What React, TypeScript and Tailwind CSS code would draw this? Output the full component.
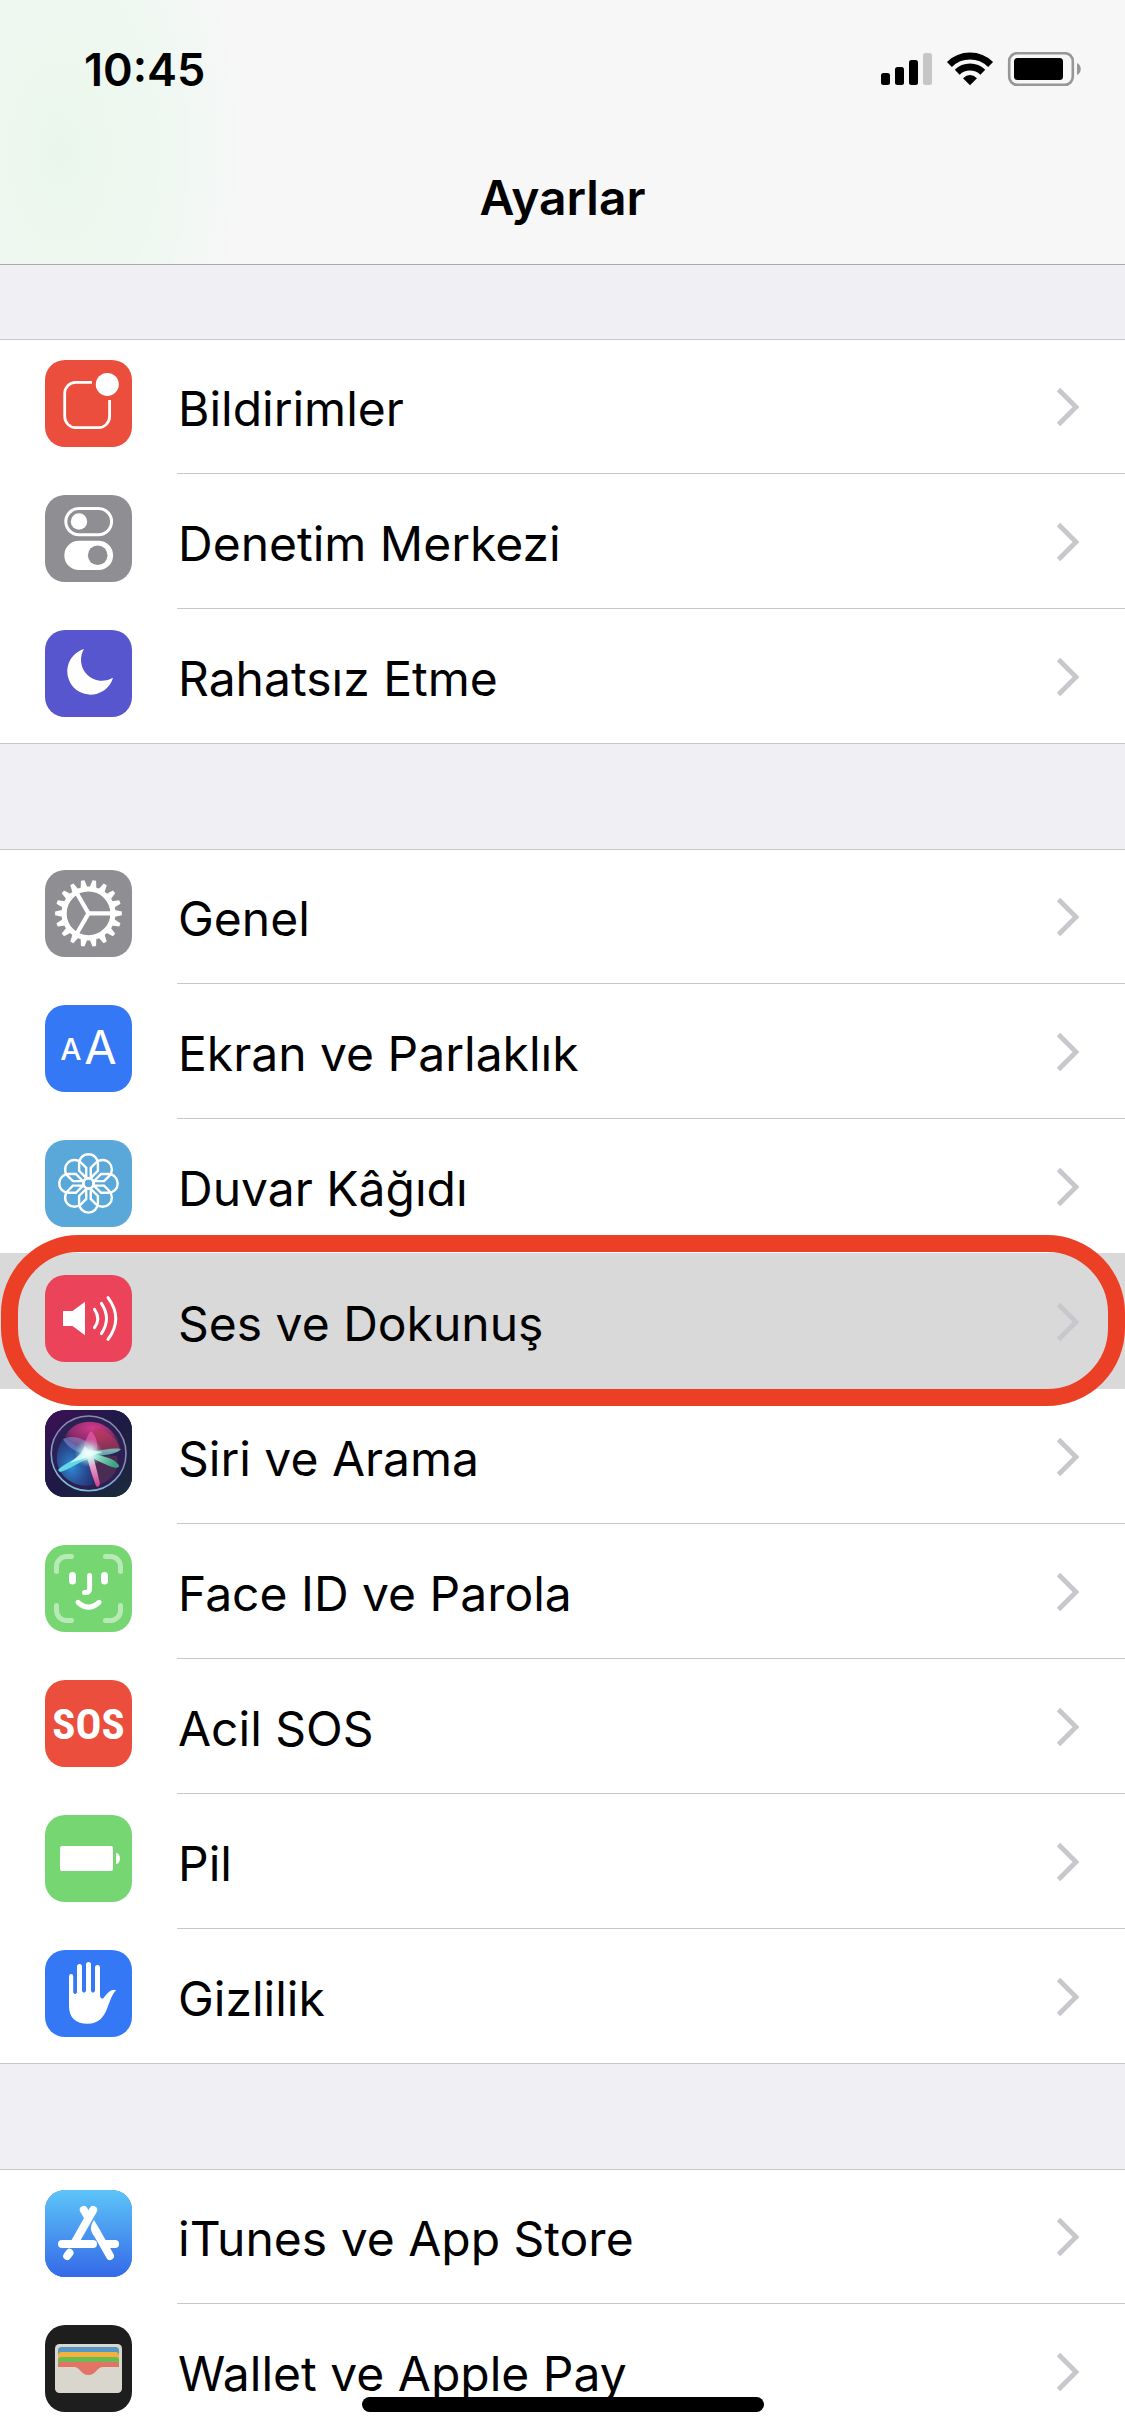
import type { ReactNode } from "react";

function Glyph({ children }: { children: ReactNode }) {
  return (
    <svg viewBox="0 0 87 87" className="size-full" fill="none" aria-hidden="true">
      {children}
    </svg>
  );
}

const NotificationsIcon = () => (
  <Glyph>
    <path
      d="M47 22.4H30.7a11 11 0 0 0-11 11v23.2a11 11 0 0 0 11 11h22.9a11 11 0 0 0 11-11V40"
      stroke="#fff"
      strokeWidth="2.8"
    />
    <circle cx="62.3" cy="24.4" r="11.5" fill="#fff" />
  </Glyph>
);

const ControlCenterIcon = () => (
  <Glyph>
    <rect x="20.8" y="13.5" width="45.8" height="26.2" rx="13.1" stroke="#fff" strokeWidth="3" />
    <circle cx="34" cy="26.5" r="8.2" fill="#fff" />
    <rect x="19.3" y="45.7" width="48.8" height="29.3" rx="14.6" fill="#fff" />
    <circle cx="52.7" cy="60.3" r="9.8" fill="#8e8e93" />
  </Glyph>
);

const MoonIcon = () => (
  <Glyph>
    <path d="M39 19A23.3 23.3 0 1 0 68 47.7A21 21 0 0 1 39 19Z" fill="#fff" />
  </Glyph>
);

const teeth = Array.from({ length: 18 }, (_, i) => i * 20);

const GearIcon = () => (
  <Glyph>
    <g transform="translate(43.5 43.4)">
      {teeth.map((a) => (
        <path key={a} transform={`rotate(${a})`} d="M24-3.8L33.4-1.8V1.8L24 3.8Z" fill="#fff" />
      ))}
      <circle r="24.4" stroke="#fff" strokeWidth="5.2" />
      {[0, 120, 240].map((a) => (
        <path key={a} transform={`rotate(${a})`} d="M0 0H23" stroke="#fff" strokeWidth="4.2" />
      ))}
    </g>
  </Glyph>
);

const TextSizeIcon = () => (
  <Glyph>
    <text x="26" y="55" textAnchor="middle" fill="#fff" fontSize="30" className="font-medium">
      A
    </text>
    <text x="55.5" y="59" textAnchor="middle" fill="#fff" fontSize="47">
      A
    </text>
  </Glyph>
);

const FlowerIcon = () => (
  <Glyph>
    <g transform="translate(43.5 43.4)" stroke="#fff" strokeWidth="2.4">
      {[0, 45, 90, 135, 180, 225, 270, 315].map((a) => (
        <path
          key={a}
          transform={`rotate(${a})`}
          d="M-9.4-19.8A9.4 9.4 0 0 1 9.4-19.8V-12.6L2-5.2H-2L-9.4-12.6Z"
        />
      ))}
      <circle r="5" />
    </g>
  </Glyph>
);

const SpeakerIcon = () => (
  <Glyph>
    <path d="M18 36H27.5L40 26.7V60.3L27.5 51H18Z" fill="#fff" />
    <g stroke="#fff" strokeWidth="3" strokeLinecap="round">
      <path d="M49.5 34.3Q56 43.5 49.5 52.7" />
      <path d="M56.4 28.4Q66.6 43.5 56.4 58.6" />
      <path d="M63 22.6Q78.5 43.5 63 64.4" />
    </g>
  </Glyph>
);

const SiriIcon = () => (
  <Glyph>
    <defs>
      <linearGradient id="siri-bg" x1="0" y1="0" x2="1" y2="1">
        <stop offset="0" stopColor="#3d1058" />
        <stop offset="0.5" stopColor="#1d1a45" />
        <stop offset="1" stopColor="#1b2c3c" />
      </linearGradient>
      <linearGradient id="siri-ring" x1="0.8" y1="0" x2="0.4" y2="1">
        <stop offset="0" stopColor="#8c8aa0" />
        <stop offset="0.5" stopColor="#8a86bd" />
        <stop offset="1" stopColor="#7dc0d8" />
      </linearGradient>
      <radialGradient id="siri-pink" cx="0.5" cy="0.2" r="0.7">
        <stop offset="0" stopColor="#d23a8c" />
        <stop offset="0.6" stopColor="#a52e72" stopOpacity="0.8" />
        <stop offset="1" stopColor="#63286c" stopOpacity="0.2" />
      </radialGradient>
      <radialGradient id="siri-blue" cx="0.4" cy="0.6" r="0.7">
        <stop offset="0" stopColor="#2f8fd8" />
        <stop offset="1" stopColor="#24459a" stopOpacity="0.4" />
      </radialGradient>
      <radialGradient id="siri-glow">
        <stop offset="0" stopColor="#fff" />
        <stop offset="0.35" stopColor="#d5fff5" stopOpacity="0.8" />
        <stop offset="1" stopColor="#8de8e0" stopOpacity="0" />
      </radialGradient>
      <linearGradient id="siri-teal" x1="0" y1="0" x2="1" y2="0.3">
        <stop offset="0" stopColor="#c9fff2" />
        <stop offset="1" stopColor="#3da481" />
      </linearGradient>
      <linearGradient id="siri-petal" x1="0" y1="0" x2="0" y2="1">
        <stop offset="0" stopColor="#f6e4f5" />
        <stop offset="1" stopColor="#d0418f" />
      </linearGradient>
    </defs>
    <rect width="87" height="87" fill="url(#siri-bg)" />
    <circle cx="43.6" cy="43.4" r="37.4" fill="#2a2052" />
    <path d="M20 27C28 8 56 7 68 23C76 32 78 42 70 42L43 42Z" fill="url(#siri-pink)" />
    <path d="M50 18C66 20 77 35 74 40C70 43 55 42 44 42Z" fill="#b83a58" opacity="0.65" />
    <path d="M19 28C8 42 10 60 22 69C34 78 46 76 49 74L43 43Z" fill="url(#siri-blue)" />
    <path d="M72 46C76 62 62 74 52 75L44 44Z" fill="#543055" opacity="0.8" />
    <path d="M18 29C27 24 44 28 52 43L39 44C31 42 22 37 18 29Z" fill="#9c9be0" opacity="0.5" />
    <path d="M46 21C53 28 54 38 50 46L38 42C39 34 41 27 46 21Z" fill="#e85fae" opacity="0.7" />
    <path d="M38 43C31 50 19 53 13 60L15 62C24 60 33 52 46 48Z" fill="#62d8e6" />
    <path d="M41 41C53 46 66 46 73 54C76 57 72 59 67 57C58 54 49 48 41 46Z" fill="url(#siri-teal)" />
    <path d="M44 40C55 42 66 37 76 39C73 44 57 46 44 46Z" fill="#79d9cd" opacity="0.75" />
    <path d="M41 43C44 56 48 68 51 76C54 78 56 75 54 70C52 60 49 50 47 42Z" fill="url(#siri-petal)" />
    <circle cx="43.5" cy="43" r="14" fill="url(#siri-glow)" />
    <path d="M36 43L40 36L43 40L58 42L46 46L25 53Z" fill="#eafffb" opacity="0.75" />
    <circle cx="43.6" cy="43.4" r="37.4" stroke="url(#siri-ring)" strokeWidth="1.6" />
  </Glyph>
);

const FaceIdIcon = () => (
  <Glyph>
    <g stroke="#fff" strokeWidth="5" strokeLinecap="round">
      <path
        opacity="0.48"
        d="M11.5 26.5V21.5A10 10 0 0 1 21.5 11.5H26.5M60.5 11.5H65.5A10 10 0 0 1 75.5 21.5V26.5M75.5 60.5V65.5A10 10 0 0 1 65.5 75.5H60.5M26.5 75.5H21.5A10 10 0 0 1 11.5 65.5V60.5"
      />
      <path d="M44.6 30.5V43.5Q44.6 47.6 40.6 47.6H39.5" />
      <path d="M33 57.3Q43.5 67 54 57.3" />
    </g>
    <rect x="24" y="27" width="7" height="12.4" rx="3.5" fill="#fff" />
    <rect x="56" y="27" width="7" height="12.4" rx="3.5" fill="#fff" />
  </Glyph>
);

const SosIcon = () => (
  <Glyph>
    <text
      x="43.5"
      y="59"
      textAnchor="middle"
      fill="#fff"
      fontSize="43"
      className="font-['Liberation_Sans_Narrow','Roboto_Condensed',Roboto,sans-serif] font-bold"
    >
      SOS
    </text>
  </Glyph>
);

const BatteryIcon = () => (
  <Glyph>
    <rect x="15" y="31" width="53" height="25" rx="2" fill="#fff" />
    <path d="M71 38C76.3 38 76.3 49 71 49Z" fill="#fff" />
  </Glyph>
);

const HandIcon = () => (
  <Glyph>
    <path
      fill="#fff"
      d="M24 26.2A2.1 2.1 0 0 1 28.2 26.2V42.5Q30 45.5 32 42.5V16.5A2.5 2.5 0 0 1 37 16.5V41Q39 44.5 41 41V14.5A2.5 2.5 0 0 1 46 14.5V41Q48 44.5 50 41V17.5A2.5 2.5 0 0 1 55 17.5V46Q56 50 58.5 48C61 45 63 42 66 40.5Q69 39 71.2 40.2C67 44 65 51 62.5 57.5C59 67 54 73.7 42.5 73.7C30 73.7 24 67 24 56Z"
    />
  </Glyph>
);

const AppStoreIcon = () => (
  <Glyph>
    <defs>
      <linearGradient id="store-bg" x1="0" y1="0" x2="0" y2="1">
        <stop offset="0" stopColor="#5dc5f8" />
        <stop offset="1" stopColor="#3569e8" />
      </linearGradient>
    </defs>
    <rect width="87" height="87" fill="url(#store-bg)" />
    <g stroke="#fff" strokeWidth="8" strokeLinecap="round">
      <path d="M48.2 20L30 52" />
      <path d="M38.8 20L43 27" />
      <path d="M17 54H48" />
      <path d="M62 54H70" />
      <path d="M52 43L65 66" />
      <path d="M24.5 62.8L22.2 66" />
    </g>
    <path d="M49 30C45 36 45 40 48.5 45.5L55.5 41Z" fill="#fff" />
  </Glyph>
);

const WalletIcon = () => (
  <Glyph>
    <rect x="10" y="19" width="67" height="49" rx="4.5" fill="#d9d6cd" />
    <path d="M13 42V25.5Q13 22 16.5 22H70.5Q74 22 74 25.5V42Z" fill="#5597c6" />
    <path d="M13 42V30.5Q13 27 16.5 27H70.5Q74 27 74 30.5V42Z" fill="#f4b13e" />
    <path d="M13 42V35.5Q13 32 16.5 32H70.5Q74 32 74 35.5V42Z" fill="#6dbb50" />
    <path
      d="M13 42V40.5Q13 37 16.5 37H70.5Q74 37 74 40.5V42H58C52 42 51 50 43.5 50C36 50 35 42 29 42Z"
      fill="#e37366"
    />
  </Glyph>
);

type Item = { label: string; tile: string; icon: ReactNode; selected?: boolean };

const groups: Item[][] = [
  [
    { label: "Bildirimler", tile: "bg-[#eb4e3d]", icon: <NotificationsIcon /> },
    { label: "Denetim Merkezi", tile: "bg-[#8e8e93]", icon: <ControlCenterIcon /> },
    { label: "Rahatsız Etme", tile: "bg-[#5856ce]", icon: <MoonIcon /> },
  ],
  [
    { label: "Genel", tile: "bg-[#8e8e93]", icon: <GearIcon /> },
    { label: "Ekran ve Parlaklık", tile: "bg-[#3478f6]", icon: <TextSizeIcon /> },
    { label: "Duvar Kâğıdı", tile: "bg-[#5aa8d9]", icon: <FlowerIcon /> },
    { label: "Ses ve Dokunuş", tile: "bg-[#eb445a]", icon: <SpeakerIcon />, selected: true },
    { label: "Siri ve Arama", tile: "bg-[#1d1a45]", icon: <SiriIcon /> },
    { label: "Face ID ve Parola", tile: "bg-[#76d672]", icon: <FaceIdIcon /> },
    { label: "Acil SOS", tile: "bg-[#eb4e3d]", icon: <SosIcon /> },
    { label: "Pil", tile: "bg-[#76d672]", icon: <BatteryIcon /> },
    { label: "Gizlilik", tile: "bg-[#3478f6]", icon: <HandIcon /> },
  ],
  [
    { label: "iTunes ve App Store", tile: "bg-[#3478f6]", icon: <AppStoreIcon /> },
    { label: "Wallet ve Apple Pay", tile: "bg-[#1e1e1e]", icon: <WalletIcon /> },
  ],
];

function Row({ item }: { item: Item }) {
  return (
    <li
      className={
        item.selected
          ? "relative z-10 -mt-px h-[136px] border-t border-[#d9d9d9] bg-[#d9d9d9]"
          : "h-[135px] border-[#c8c7cc] first:-mt-px last:border-b"
      }
    >
      <a href="#" className="group flex h-full pl-[45px]">
        <span className={`mt-[21px] size-[87px] shrink-0 overflow-hidden rounded-[20px] ${item.tile}`}>
          {item.icon}
        </span>
        <span
          className={`ml-[45px] flex flex-1 items-center justify-between border-b pr-11 pl-px [li:last-child_&]:border-white ${
            item.selected ? "border-[#d9d9d9]" : "border-[#c8c7cc]"
          }`}
        >
          <span className="pt-[6px] text-[48px] leading-[60px] whitespace-nowrap">{item.label}</span>
          <svg viewBox="0 0 26 42" className="mt-0.5 h-[42px] w-[26px]" fill="none" aria-hidden="true">
            <path d="M3.5 3.5L21 21L3.5 38.5" stroke="#c7c7cc" strokeWidth="4.8" />
          </svg>
        </span>
      </a>
      {item.selected && (
        <span className="pointer-events-none absolute -top-[19px] right-0 -bottom-[17px] left-px rounded-[78px] border-[17px] border-[#ec4026]" />
      )}
    </li>
  );
}

function StatusBar() {
  return (
    <div className="flex h-[132px] items-center justify-between pt-2 pr-[43px] pl-[84px]">
      <time className="text-[45px] leading-[54px] font-semibold">10:45</time>
      <svg viewBox="0 0 201 36" className="h-9 w-[201px]" fill="none" aria-hidden="true">
        <rect x="0" y="21" width="9" height="12" rx="2.5" fill="#000" />
        <rect x="14" y="15" width="9" height="18" rx="2.5" fill="#000" />
        <rect x="28" y="8" width="9" height="25" rx="2.5" fill="#000" />
        <rect x="42" y="1" width="9" height="32" rx="2.5" fill="#c6c6c6" />
        <path d="M68.4 12.4A29.2 29.2 0 0 1 109.6 12.4" stroke="#000" strokeWidth="7" />
        <path d="M76.2 20.2A18.4 18.4 0 0 1 101.8 20.2" stroke="#000" strokeWidth="7" />
        <path d="M89 33.2L82 26.2Q89 20 96 26.2Z" fill="#000" />
        <rect x="128.2" y="1.2" width="63.6" height="31.6" rx="8" stroke="#979797" strokeWidth="2.6" />
        <rect x="133" y="6" width="49" height="22" rx="3.5" fill="#000" />
        <path d="M196 11C201 13 201 21 196 23Z" fill="#979797" />
      </svg>
    </div>
  );
}

export default function App() {
  return (
    <div className="relative flex h-screen flex-col overflow-hidden bg-[#efeff4] font-[Inter,'Noto_Sans',sans-serif] text-black">
      <header className="shrink-0 border-b border-[#a9a9ad] bg-[#f7f7f7] bg-[radial-gradient(ellipse_190px_340px_at_60px_150px,#ebf6eb,#eef8f1_50%,transparent)]">
        <StatusBar />
        <h1 className="pt-[36px] pb-9 text-center text-[48px] leading-[60px] font-semibold">Ayarlar</h1>
      </header>
      <main className="flex flex-1 flex-col gap-[105px] overflow-hidden pt-[74px]">
        {groups.map((items) => (
          <ul key={items[0].label} className="shrink-0 border-t border-[#c8c7cc] bg-white">
            {items.map((item) => (
              <Row key={item.label} item={item} />
            ))}
          </ul>
        ))}
      </main>
      <div className="absolute bottom-6 left-1/2 z-20 h-[15px] w-[402px] -translate-x-1/2 rounded-full bg-black" />
    </div>
  );
}
